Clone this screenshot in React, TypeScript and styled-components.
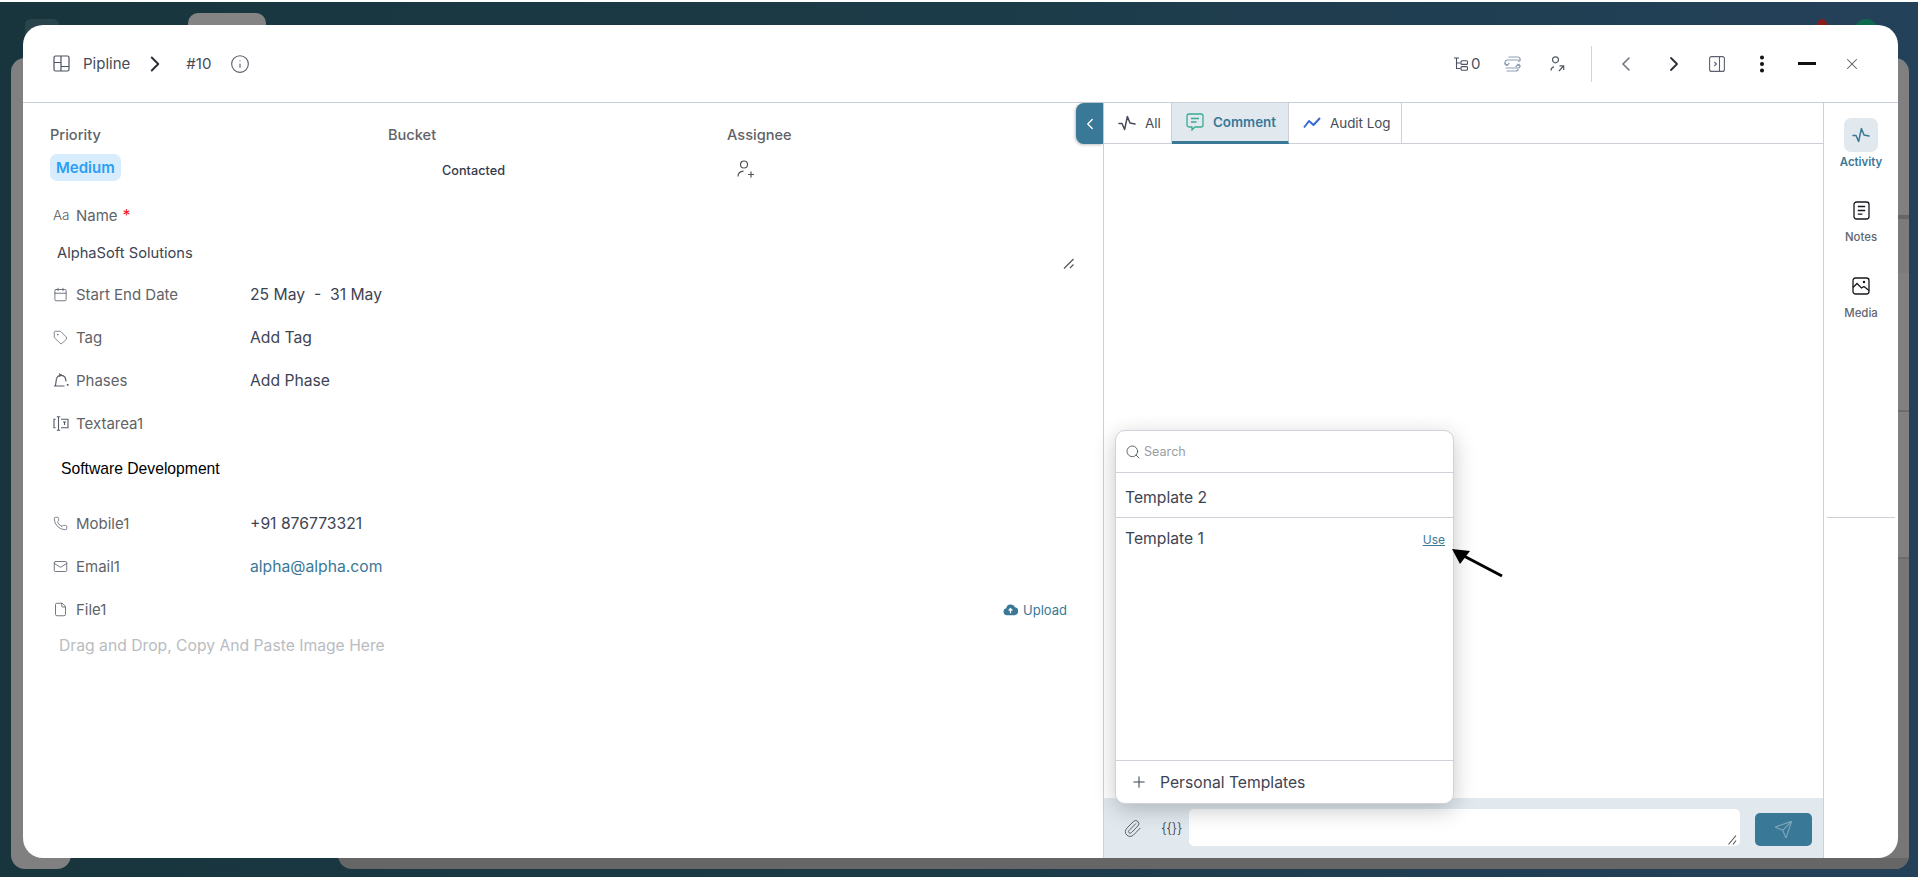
import styled, { createGlobalStyle } from "styled-components";
import {
  Calendar,
  ChevronLeft,
  ChevronRight,
  EllipsisVertical,
  File,
  Info,
  Mail,
  Paperclip,
  Phone,
  Plus,
  Search,
  Send,
  Tag,
  X,
} from "lucide-react";
import type { ReactNode } from "react";

const GlobalStyle = createGlobalStyle`
  html, body {
    margin: 0;
    padding: 0;
  }
  body {
    font-family: Inter, "Liberation Sans", sans-serif;
    overflow: hidden;
  }
`;

const Page = styled.div`
  position: relative;
  box-sizing: border-box;
  width: 1918px;
  height: 877px;
  padding: 23px 20px 19px 23px;
  border-top: 2px solid #fff;
  background: linear-gradient(90deg, #18353d 0%, #1c3b48 50%, #24415a 100%);
  display: flex;
  overflow: hidden;
`;

/* dimmed page that sits under the modal */
const BehindLeft = styled.div`
  position: absolute;
  left: 11px;
  top: 56px;
  width: 60px;
  height: 811px;
  border-radius: 14px;
  background: #808080;
`;

const BehindRight = styled.div`
  position: absolute;
  right: 9px;
  top: 56px;
  width: 40px;
  height: 811px;
  border-radius: 14px;
  background: linear-gradient(
    180deg,
    #808080 0 157px,
    #666 157px 161px,
    #7b7b7b 161px 215px,
    #808080 215px 352px,
    #6c6c6c 352px 354px,
    #808080 354px 499px,
    #6c6c6c 499px 501px,
    #777 501px
  );
`;

const BehindBottom = styled.div`
  position: absolute;
  left: 338px;
  right: 9px;
  bottom: 8px;
  height: 30px;
  border-radius: 0 0 14px 14px;
  background: linear-gradient(180deg, #777 0 19px, #666 19px);
`;

const BehindTab = styled.div`
  position: absolute;
  left: 188px;
  top: 11px;
  width: 78px;
  height: 30px;
  border-radius: 10px 10px 0 0;
  background: #848484;
`;

const BehindFaintTab = styled.div`
  position: absolute;
  left: 25px;
  top: 17px;
  width: 34px;
  height: 30px;
  border-radius: 6px 6px 0 0;
  background: #2a444c;
`;

const BehindDot = styled.div<{ $color: string; $left: number }>`
  position: absolute;
  left: ${(p) => p.$left}px;
  top: 17px;
  width: ${(p) => (p.$left > 1850 ? 26 : 14)}px;
  height: 30px;
  border-radius: 50%;
  background: ${(p) => p.$color};
`;

const Modal = styled.div`
  position: relative;
  flex: 1;
  display: flex;
  flex-direction: column;
  min-width: 0;
  background: #fff;
  border-radius: 20px;
  overflow: hidden;
`;

const Header = styled.header`
  flex: 0 0 77px;
  box-sizing: border-box;
  display: flex;
  align-items: center;
  justify-content: space-between;
  padding: 0 23px 0 30px;
`;

const Crumbs = styled.div`
  display: flex;
  align-items: center;
  color: #4a5160;
  font-size: 15px;
`;

const CrumbText = styled.span<{ $left: number }>`
  margin-left: ${(p) => p.$left}px;
  color: #464c58;
`;

const CrumbChevron = styled(ChevronRight)`
  margin: 0 18px 0 12px;
  color: #2c2f36;
`;

const CrumbInfo = styled(Info)`
  margin-left: 19px;
  color: #555b66;
`;

const Toolbar = styled.div`
  display: flex;
  align-items: center;
`;

const SubtaskCount = styled.div`
  display: flex;
  align-items: center;
  gap: 2px;
  margin-right: 9px;
  font-size: 15px;
  color: #4a5160;
`;

const ToolButton = styled.div<{ $color?: string }>`
  width: 45.2px;
  display: flex;
  justify-content: center;
  align-items: center;
  color: ${(p) => p.$color ?? "#2c2f36"};
`;

const NextChevron = styled(ChevronRight)`
  margin-left: 4px;
`;

const ToolDivider = styled.div`
  width: 1px;
  height: 36px;
  margin: 0 12px 0 11px;
  background: #cfd3da;
`;

const MinusBar = styled.div`
  width: 18px;
  height: 3px;
  background: #111;
`;

const Body = styled.div`
  flex: 1;
  display: flex;
  min-height: 0;
  border-top: 1px solid #c9cedb;
`;

const LeftPanel = styled.section`
  flex: 0 0 1081px;
  box-sizing: border-box;
  padding: 22px 0 0 27px;
  border-right: 1px solid #cdd0d6;
`;

const MetaGrid = styled.div`
  display: grid;
  grid-template-columns: 338px 339px 1fr;
  margin-bottom: 12px;
`;

const MetaColumn = styled.div`
  display: flex;
  flex-direction: column;
  gap: 9px;
  align-items: flex-start;
`;

const MetaLabel = styled.span`
  font-size: 14.6px;
  line-height: 20px;
  font-weight: 500;
  color: #5f6368;
`;

const PriorityChip = styled.span`
  height: 27px;
  padding: 0 6px;
  border-radius: 7px;
  background: #d7ecfc;
  color: #2b9ff5;
  font-size: 15px;
  font-weight: 600;
  line-height: 27px;
`;

const BucketValue = styled.span`
  height: 27px;
  margin-left: 54px;
  font-size: 12.7px;
  font-weight: 500;
  line-height: 33px;
  color: #33394a;
`;

const AssigneeIcon = styled.svg`
  margin: 6px 0 0 10px;
  color: #555;
`;

const Field = styled.div`
  display: grid;
  grid-template-columns: 23px 174px auto 1fr;
  align-items: center;
  height: 43px;
  padding-left: 3px;
  font-size: 15px;
`;

const FieldIcon = styled.span`
  display: flex;
  align-items: center;
  color: #555b66;
`;

const AaGlyph = styled.span`
  font-size: 13.5px;
  font-weight: 300;
  color: #555b66;
`;

const FieldLabel = styled.span`
  color: #5f6368;
`;

const FieldValue = styled.span<{ $link?: boolean }>`
  font-size: 15.7px;
  color: ${(p) => (p.$link ? "#3a7897" : "#3d4454")};
`;

const Required = styled.span`
  margin-left: 5px;
  font-size: 16px;
  color: #f01616;
`;

const NameValue = styled.div`
  height: 37px;
  display: flex;
  justify-content: space-between;
  padding: 0 29px 4px 7px;
  box-sizing: border-box;
  font-size: 14.7px;
  line-height: 34px;
  color: #3d4454;
`;

const GripIcon = styled.svg`
  align-self: flex-end;
  color: #555;
`;

const TextareaValue = styled.div`
  height: 57px;
  box-sizing: border-box;
  padding: 14px 0 0 11px;
  font-family: "Liberation Sans", Arial, sans-serif;
  font-size: 15.7px;
  line-height: 20px;
  color: #000;
`;

const UploadLink = styled.span`
  grid-column: 4;
  justify-self: end;
  display: flex;
  align-items: center;
  gap: 5px;
  padding-right: 36px;
  font-size: 13px;
  color: #3a7897;
`;

const DropHint = styled.div`
  padding: 5px 0 0 9px;
  font-size: 15.7px;
  line-height: 20px;
  color: #b9bcc1;
`;

const RightPanel = styled.section`
  position: relative;
  flex: 1;
  min-width: 0;
  display: flex;
  flex-direction: column;
  border-right: 1px solid #cdd0d6;
`;

const CollapseButton = styled.div`
  position: absolute;
  left: -28px;
  top: 0;
  width: 27px;
  height: 41px;
  display: flex;
  align-items: center;
  justify-content: center;
  border-radius: 8px 0 0 8px;
  background: #3a7897;
  color: #fff;
  box-shadow: -1px 1px 3px rgba(0, 0, 0, 0.25);
`;

const Tabs = styled.div`
  flex: 0 0 41px;
  box-sizing: border-box;
  display: flex;
  border-bottom: 1px solid #cdd0d6;
`;

const TabItem = styled.div<{ $active?: boolean; $width: number }>`
  box-sizing: border-box;
  width: ${(p) => p.$width}px;
  display: flex;
  align-items: center;
  gap: 9px;
  padding-left: 14px;
  font-size: 13.4px;
  font-weight: ${(p) => (p.$active ? 600 : 400)};
  color: ${(p) => (p.$active ? "#3a7897" : "#454b57")};
  background: ${(p) => (p.$active ? "#e1e9ef" : "transparent")};
  border-right: 1px solid #cdd0d6;
  border-bottom: ${(p) => (p.$active ? "3px solid #3a7897" : "none")};
  margin-bottom: ${(p) => (p.$active ? "-1px" : "0")};
`;

const Feed = styled.div`
  position: relative;
  flex: 1;
`;

const TemplatePopup = styled.div`
  position: absolute;
  left: 11px;
  bottom: -6px;
  z-index: 2;
  box-sizing: border-box;
  width: 339px;
  height: 374px;
  display: flex;
  flex-direction: column;
  background: #fff;
  border: 1px solid #cfd2d8;
  border-radius: 10px;
  box-shadow: 0 6px 22px rgba(0, 0, 0, 0.22);
`;

const PopupSearch = styled.div`
  flex: 0 0 41px;
  display: flex;
  align-items: center;
  gap: 3px;
  padding-left: 9px;
  border-bottom: 1px solid #cfd2d8;
  font-size: 12.6px;
  color: #9a9da3;
`;

const SearchIcon = styled(Search)`
  color: #555b66;
`;

const TemplateRow = styled.div`
  flex: 0 0 45px;
  box-sizing: border-box;
  display: flex;
  align-items: center;
  padding: 4px 0 0 9px;
  border-bottom: 1px solid #cfd2d8;
  font-size: 15.7px;
  color: #3d4454;
`;

const TemplateList = styled.div`
  flex: 1;
  display: flex;
  justify-content: space-between;
  align-items: flex-start;
  padding: 11px 8px 0 9px;
  font-size: 15.7px;
  line-height: 20px;
  color: #3d4454;
`;

const UseLink = styled.a`
  margin-top: 1px;
  font-size: 12px;
  color: #3a7897;
  text-decoration: underline;
`;

const PopupFooter = styled.div`
  flex: 0 0 42px;
  display: flex;
  align-items: center;
  gap: 12px;
  padding-left: 14px;
  border-top: 1px solid #cfd2d8;
  font-size: 15.7px;
  color: #3d4454;
`;

const Composer = styled.div`
  flex: 0 0 60px;
  box-sizing: border-box;
  display: flex;
  align-items: flex-start;
  padding: 11px 11px 0 19px;
  background: #e1e9ef;
`;

const ClipIcon = styled(Paperclip)`
  flex: 0 0 19px;
  margin-top: 10px;
  color: #555b66;
`;

const VarsButton = styled.span`
  flex: 0 0 19px;
  margin: 10px 7px 0 19px;
  font-size: 14px;
  font-weight: 300;
  letter-spacing: -0.6px;
  color: #333946;
`;

const ComposerInput = styled.div`
  flex: 1;
  height: 36px;
  display: flex;
  justify-content: flex-end;
  align-items: flex-end;
  padding: 0 3px 1px 0;
  background: #fff;
  border-radius: 5px;
`;

const SendButton = styled.div`
  flex: 0 0 57px;
  height: 33px;
  margin: 4px 0 0 15px;
  display: flex;
  align-items: center;
  justify-content: center;
  border-radius: 5px;
  background: #3a7897;
  color: #7fa8bc;
`;

const Rail = styled.aside`
  flex: 0 0 74px;
  box-sizing: border-box;
  display: flex;
  flex-direction: column;
  align-items: center;
  padding-top: 15px;
`;

const RailItem = styled.div<{ $active?: boolean; $height: number }>`
  height: ${(p) => p.$height}px;
  display: flex;
  flex-direction: column;
  align-items: center;
  font-size: 11.4px;
  font-weight: ${(p) => (p.$active ? 600 : 500)};
  color: ${(p) => (p.$active ? "#3a7897" : "#606673")};
`;

const RailIcon = styled.div<{ $active?: boolean }>`
  width: 34px;
  height: 34px;
  margin-bottom: 3px;
  display: flex;
  align-items: center;
  justify-content: center;
  border-radius: 7px;
  background: ${(p) => (p.$active ? "#e1e9ef" : "transparent")};
  color: ${(p) => (p.$active ? "#3a7897" : "#16181d")};
`;

const RailDivider = styled.div`
  align-self: stretch;
  height: 1px;
  margin: 197px 3px 0 3px;
  background: #cdd0d6;
`;

/* annotation arrow drawn on top of the screenshot */
const ArrowMark = styled.svg`
  position: absolute;
  left: 1427px;
  top: 522px;
  z-index: 3;
`;

const TableIcon = () => (
  <svg width="17" height="17" viewBox="0 0 17 17" fill="none" stroke="currentColor" strokeWidth="1.2">
    <rect x="1" y="1" width="15" height="15" rx="1.5" />
    <path d="M1 7.5h7M8 1v15M8 11.5h8" />
  </svg>
);

const SubtaskIcon = () => (
  <svg width="15" height="14" viewBox="0 0 15 14" fill="none" stroke="currentColor" strokeWidth="1.1">
    <path d="M0 1h5M2.5 1v10.5h4M2.5 6h4" />
    <rect x="7" y="3.8" width="6.5" height="3.6" rx="1" />
    <rect x="7" y="9.6" width="6.5" height="3.6" rx="1" />
  </svg>
);

const ConvertIcon = () => (
  <svg width="19" height="16" viewBox="0 0 19 16" fill="none" stroke="#8e9db6" strokeWidth="1.2" strokeLinecap="round">
    <path d="M6 1h9a2.3 2.3 0 0 1 .6 4.5" />
    <path d="M17 4H4.5a2.7 2.7 0 0 0-.5 5.3" />
    <path d="M2 7.5 4 9.5l2-2" />
    <path d="M3 12h12a2 2 0 0 0 1-3.7" />
    <path d="M4 15h9a2 2 0 0 0 2-2" />
    <path d="M13 10.5 15 8.3l2 2" />
  </svg>
);

const UserShareIcon = () => (
  <svg width="15" height="16" viewBox="0 0 15 16" fill="none" stroke="#555b66" strokeWidth="1.2">
    <circle cx="5.5" cy="3.8" r="3" />
    <path d="M1 14.5c0-2 1-3.2 3-3.7M9 15l4.5-5M9.5 9.8h4.2V14" />
  </svg>
);

const PanelIcon = () => (
  <svg width="16" height="16" viewBox="0 0 16 16" fill="none" stroke="#5b6170" strokeWidth="1.1">
    <rect x="0.6" y="0.6" width="14.8" height="14.8" rx="2" />
    <path d="M10.5 0.6v14.8M5.4 6l2 2-2 2" />
  </svg>
);

const PhaseIcon = () => (
  <svg width="16" height="15" viewBox="0 0 16 15" fill="none" stroke="currentColor" strokeWidth="1.2">
    <path d="M3.5 5.5a5 5 0 0 1 8.6-1.2l1 4M1 13h10.5" />
    <path d="M3.5 5.5 2.4 13M6 .8l2 1.1-1.6 1.7M13.8 11.8h1.8M14.7 10.9v1.8" />
  </svg>
);

const TextareaIcon = () => (
  <svg width="16" height="15" viewBox="0 0 16 15" fill="none" stroke="currentColor" strokeWidth="1.1">
    <path d="M5.5.8v13.4M3.8.8h3.4M3.8 14.2h3.4M2.6 3.2H1v8.6h1.6M8 3.2h7v8.6H8" />
    <path d="M10 6h3M11.5 6v3" />
  </svg>
);

const PulseIcon = ({ size = 18 }: { size?: number }) => (
  <svg width={size} height={size} viewBox="0 0 18 18" fill="none" stroke="currentColor" strokeWidth="1.5" strokeLinejoin="round" strokeLinecap="round">
    <path d="M1 9.5h3l2.6 6L9.4 2.5 12 9l5 1" />
  </svg>
);

const CommentIcon = () => (
  <svg width="18" height="18" viewBox="0 0 18 18" fill="none" stroke="#3bab93" strokeWidth="1.3">
    <path d="M3 1h12a2 2 0 0 1 2 2v9a2 2 0 0 1-2 2h-6l-3 3v-3H3a2 2 0 0 1-2-2V3a2 2 0 0 1 2-2z" />
    <path d="M5 5.5h8M5 9h5.5" />
  </svg>
);

const TrendIcon = () => (
  <svg width="18" height="12" viewBox="0 0 18 12" fill="none" stroke="#3769d6" strokeWidth="2" strokeLinejoin="round">
    <path d="M1 10.5 6 4l4.5 4L17 1" />
  </svg>
);

const NotesIcon = () => (
  <svg width="17" height="19" viewBox="0 0 17 19" fill="none" stroke="currentColor" strokeWidth="1.3">
    <rect x="1" y="1" width="15" height="17" rx="2.5" />
    <path d="M4.8 5.5h7.4M4.8 9.5h7.4M4.8 13.2h4.6" />
  </svg>
);

const MediaIcon = () => (
  <svg width="18" height="18" viewBox="0 0 18 18" fill="none" stroke="currentColor" strokeWidth="1.3">
    <rect x="1" y="1" width="16" height="16" rx="2.5" />
    <path d="M1 10.5 5 6.5l4.5 4.5 2.5-1.5 5 4" />
    <circle cx="12" cy="5" r="0.6" fill="currentColor" />
  </svg>
);

const CloudIcon = () => (
  <svg width="15" height="13" viewBox="0 0 16 13" fill="none">
    <path d="M4 12.5a3.7 3.7 0 0 1-.6-7.3 5 5 0 0 1 9.5-1 4.2 4.2 0 0 1-.4 8.3z" fill="#3a7897" />
    <path d="M8 10.5V5.8M6 7.6 8 5.6l2 2" stroke="#fff" strokeWidth="1.3" />
  </svg>
);

const GripMark = () => (
  <GripIcon width="11" height="11" viewBox="0 0 11 11" fill="none" stroke="currentColor" strokeWidth="1.2">
    <path d="M1 10.5 10.5 1M7 10 10.5 6.5" />
  </GripIcon>
);

const FieldRow = ({
  icon,
  label,
  children,
  action,
}: {
  icon: ReactNode;
  label: ReactNode;
  children?: ReactNode;
  action?: ReactNode;
}) => (
  <Field>
    <FieldIcon>{icon}</FieldIcon>
    <FieldLabel>{label}</FieldLabel>
    <div>{children}</div>
    {action}
  </Field>
);

export default function App() {
  return (
    <>
      <GlobalStyle />
      <Page>
        <BehindLeft />
        <BehindRight />
        <BehindBottom />
        <BehindTab />
        <BehindFaintTab />
        <BehindDot $left={1815} $color="#8b1a1a" />
        <BehindDot $left={1853} $color="#0e6a4f" />
        <Modal>
          <Header>
            <Crumbs>
              <TableIcon />
              <CrumbText $left={13}>Pipline</CrumbText>
              <CrumbChevron size={26} strokeWidth={1.8} />
              <CrumbText $left={0}>#10</CrumbText>
              <CrumbInfo size={20} strokeWidth={1.3} />
            </Crumbs>
            <Toolbar>
              <SubtaskCount>
                <SubtaskIcon />0
              </SubtaskCount>
              <ToolButton>
                <ConvertIcon />
              </ToolButton>
              <ToolButton>
                <UserShareIcon />
              </ToolButton>
              <ToolDivider />
              <ToolButton $color="#6e7480">
                <ChevronLeft size={24} strokeWidth={1.6} />
              </ToolButton>
              <ToolButton>
                <NextChevron size={24} strokeWidth={1.8} />
              </ToolButton>
              <ToolButton>
                <PanelIcon />
              </ToolButton>
              <ToolButton $color="#111">
                <EllipsisVertical size={22} strokeWidth={2.4} />
              </ToolButton>
              <ToolButton>
                <MinusBar />
              </ToolButton>
              <ToolButton $color="#555b66">
                <X size={18} strokeWidth={1.4} />
              </ToolButton>
            </Toolbar>
          </Header>
          <Body>
            <LeftPanel>
              <MetaGrid>
                <MetaColumn>
                  <MetaLabel>Priority</MetaLabel>
                  <PriorityChip>Medium</PriorityChip>
                </MetaColumn>
                <MetaColumn>
                  <MetaLabel>Bucket</MetaLabel>
                  <BucketValue>Contacted</BucketValue>
                </MetaColumn>
                <MetaColumn>
                  <MetaLabel>Assignee</MetaLabel>
                  <AssigneeIcon width="18" height="18" viewBox="0 0 18 18" fill="none" stroke="currentColor" strokeWidth="1.2">
                    <circle cx="7" cy="4.5" r="3.5" />
                    <path d="M1 16.5c0-3 2-5 5.5-5.3M11 14.5h6M14 11.5v6" />
                  </AssigneeIcon>
                </MetaColumn>
              </MetaGrid>
              <FieldRow
                icon={<AaGlyph>Aa</AaGlyph>}
                label={
                  <>
                    Name<Required>*</Required>
                  </>
                }
              />
              <NameValue>
                AlphaSoft Solutions
                <GripMark />
              </NameValue>
              <FieldRow icon={<Calendar size={15} strokeWidth={1.3} />} label="Start End Date">
                <FieldValue>25 May&nbsp; - &nbsp;31 May</FieldValue>
              </FieldRow>
              <FieldRow icon={<Tag size={15} strokeWidth={1.2} />} label="Tag">
                <FieldValue>Add Tag</FieldValue>
              </FieldRow>
              <FieldRow icon={<PhaseIcon />} label="Phases">
                <FieldValue>Add Phase</FieldValue>
              </FieldRow>
              <FieldRow icon={<TextareaIcon />} label="Textarea1" />
              <TextareaValue>Software Development</TextareaValue>
              <FieldRow icon={<Phone size={15} strokeWidth={1.2} />} label="Mobile1">
                <FieldValue>+91 876773321</FieldValue>
              </FieldRow>
              <FieldRow icon={<Mail size={15} strokeWidth={1.3} />} label="Email1">
                <FieldValue $link>alpha@alpha.com</FieldValue>
              </FieldRow>
              <FieldRow
                icon={<File size={15} strokeWidth={1.3} />}
                label="File1"
                action={
                  <UploadLink>
                    <CloudIcon />
                    Upload
                  </UploadLink>
                }
              />
              <DropHint>Drag and Drop, Copy And Paste Image Here</DropHint>
            </LeftPanel>
            <RightPanel>
              <CollapseButton>
                <ChevronLeft size={18} strokeWidth={1.8} />
              </CollapseButton>
              <Tabs>
                <TabItem $width={68}>
                  <PulseIcon />
                  All
                </TabItem>
                <TabItem $active $width={117}>
                  <CommentIcon />
                  Comment
                </TabItem>
                <TabItem $width={113}>
                  <TrendIcon />
                  Audit Log
                </TabItem>
              </Tabs>
              <Feed>
                <TemplatePopup>
                  <PopupSearch>
                    <SearchIcon size={16} strokeWidth={1.4} />
                    Search
                  </PopupSearch>
                  <TemplateRow>Template 2</TemplateRow>
                  <TemplateList>
                    Template 1
                    <UseLink>Use</UseLink>
                  </TemplateList>
                  <PopupFooter>
                    <Plus size={18} strokeWidth={1.4} />
                    Personal Templates
                  </PopupFooter>
                </TemplatePopup>
              </Feed>
              <Composer>
                <ClipIcon size={19} strokeWidth={1.2} />
                <VarsButton>{"{{}}"}</VarsButton>
                <ComposerInput>
                  <svg width="9" height="10" viewBox="0 0 9 10" fill="none" stroke="#555" strokeWidth="1.1">
                    <path d="M.5 9.5 8 .5M5 9.5 8 5.5" />
                  </svg>
                </ComposerInput>
                <SendButton>
                  <Send size={19} strokeWidth={1.4} />
                </SendButton>
              </Composer>
            </RightPanel>
            <Rail>
              <RailItem $active $height={75}>
                <RailIcon $active>
                  <PulseIcon />
                </RailIcon>
                Activity
              </RailItem>
              <RailItem $height={76}>
                <RailIcon>
                  <NotesIcon />
                </RailIcon>
                Notes
              </RailItem>
              <RailItem $height={51}>
                <RailIcon>
                  <MediaIcon />
                </RailIcon>
                Media
              </RailItem>
              <RailDivider />
            </Rail>
          </Body>
          <ArrowMark width="60" height="40" viewBox="0 0 60 40" fill="none">
            <path d="M52 29 12 8" stroke="#000" strokeWidth="3" />
            <path d="M2 2 20 4 10 17z" fill="#000" />
          </ArrowMark>
        </Modal>
      </Page>
    </>
  );
}
